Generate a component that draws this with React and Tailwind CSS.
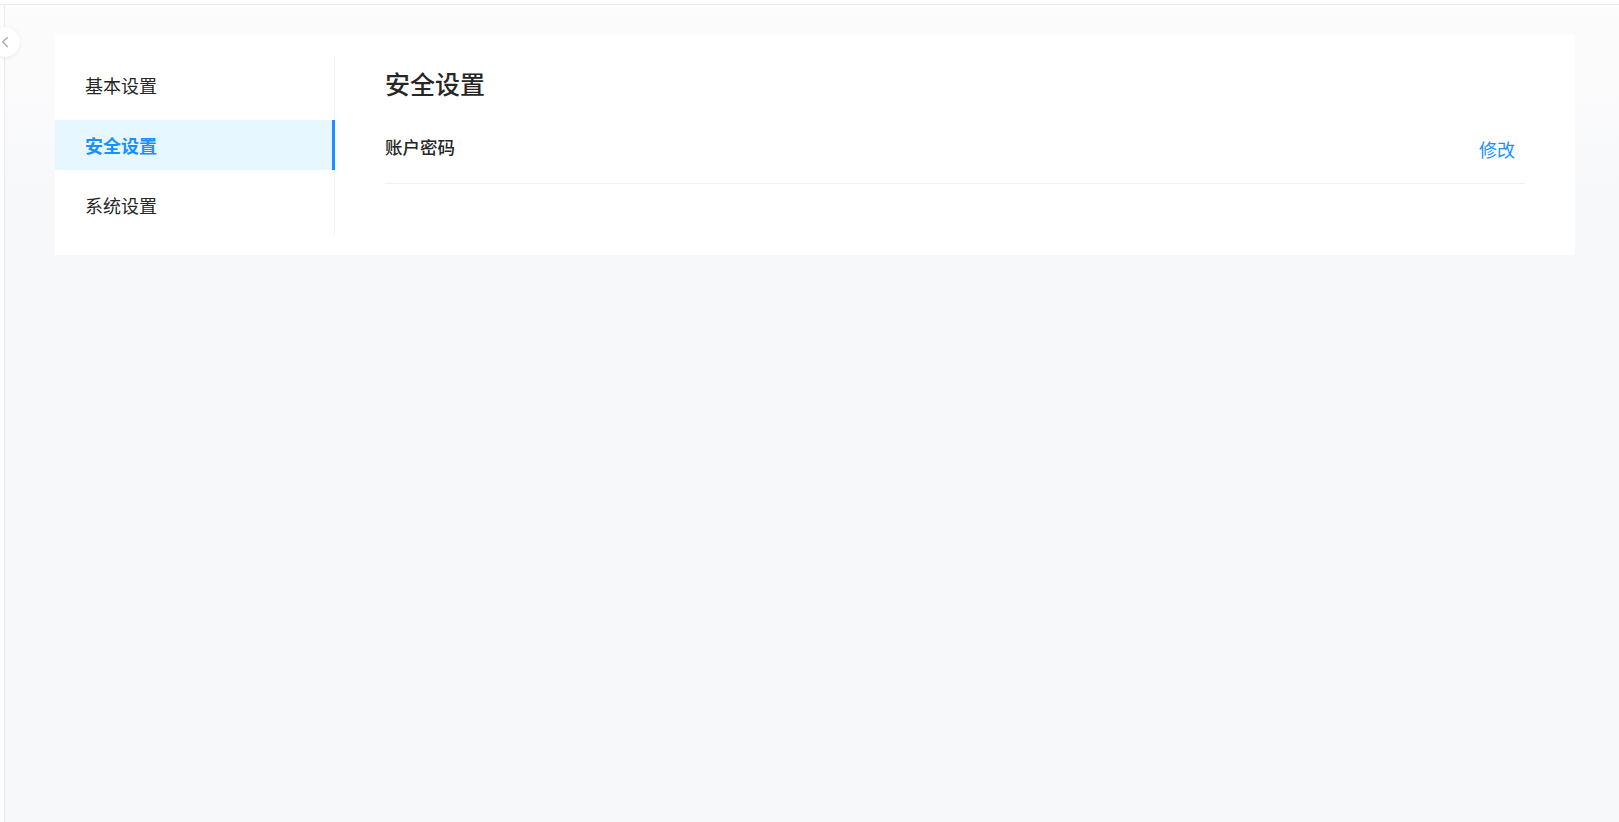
import { ChevronLeft } from "lucide-react";

const MENU = [
  { key: "basic", label: "基本设置" },
  { key: "security", label: "安全设置" },
  { key: "system", label: "系统设置" },
];

const FONT = "font-['Noto_Sans_CJK_SC','Noto_Sans',sans-serif]";

export default function App() {
  const active = "security";

  return (
    <div className={`relative flex h-[822px] w-full flex-col overflow-hidden bg-white ${FONT}`}>
      {/* ── Top strip ── */}
      <div className="h-[5px] shrink-0 border-b border-[#e8eaed] bg-white" />

      <div className="flex flex-1">
        {/* ── Collapsed sider ── */}
        <div className="w-[5px] shrink-0 border-r border-[#e8eaed] bg-white" />

        {/* ── Main area ── */}
        <main className="flex-1 bg-[#f7f8fa] bg-[linear-gradient(180deg,#fcfcfc_0px,#fbfbfc_60px,#f7f8fa_190px)] pt-[30px] pr-[44px] pl-[50px]">
          <div className="flex bg-white py-[20px]">
            {/* Settings menu */}
            <ul className="m-0 flex w-[280px] shrink-0 list-none flex-col gap-[10px] border-r border-[#f0f0f0] p-0 py-[5px]">
              {MENU.map(({ key, label }) => {
                const on = key === active;
                return (
                  <li
                    key={key}
                    className={
                      on
                        ? "relative flex h-[50px] items-center bg-[#e6f7ff] pl-[30px] text-[18px] font-semibold text-[#1890ff]"
                        : "flex h-[50px] items-center pl-[30px] text-[18px] text-[#262626]"
                    }
                  >
                    {label}
                    {on && <span className="absolute top-0 right-[-1px] h-full w-[3px] bg-[#1890ff]" />}
                  </li>
                );
              })}
            </ul>

            {/* Content */}
            <section className="flex-1 pr-[50px] pl-[50px]">
              <h2 className="mt-[10px] h-[36px] text-[25px] leading-[36px] font-medium text-[#262626]">安全设置</h2>
              <div className="flex items-start justify-between border-b border-[#f0f0f0] pt-[34px] pb-[22px]">
                <span className="text-[17.5px] leading-[24px] font-medium text-[#262626]">账户密码</span>
                <a className="mt-[2px] mr-[10px] cursor-pointer text-[18px] leading-[24px] text-[#1890ff]">修改</a>
              </div>
            </section>
          </div>
        </main>
      </div>

      {/* ── Collapse toggle ── */}
      <button className="absolute top-[27px] left-[-10px] flex h-[30px] w-[30px] items-center justify-end rounded-full bg-white pr-[6px] shadow-[0_1px_4px_rgba(0,0,0,0.08)]">
        <ChevronLeft size={18} strokeWidth={1.8} className="text-[#a8a8a8]" />
      </button>
    </div>
  );
}
